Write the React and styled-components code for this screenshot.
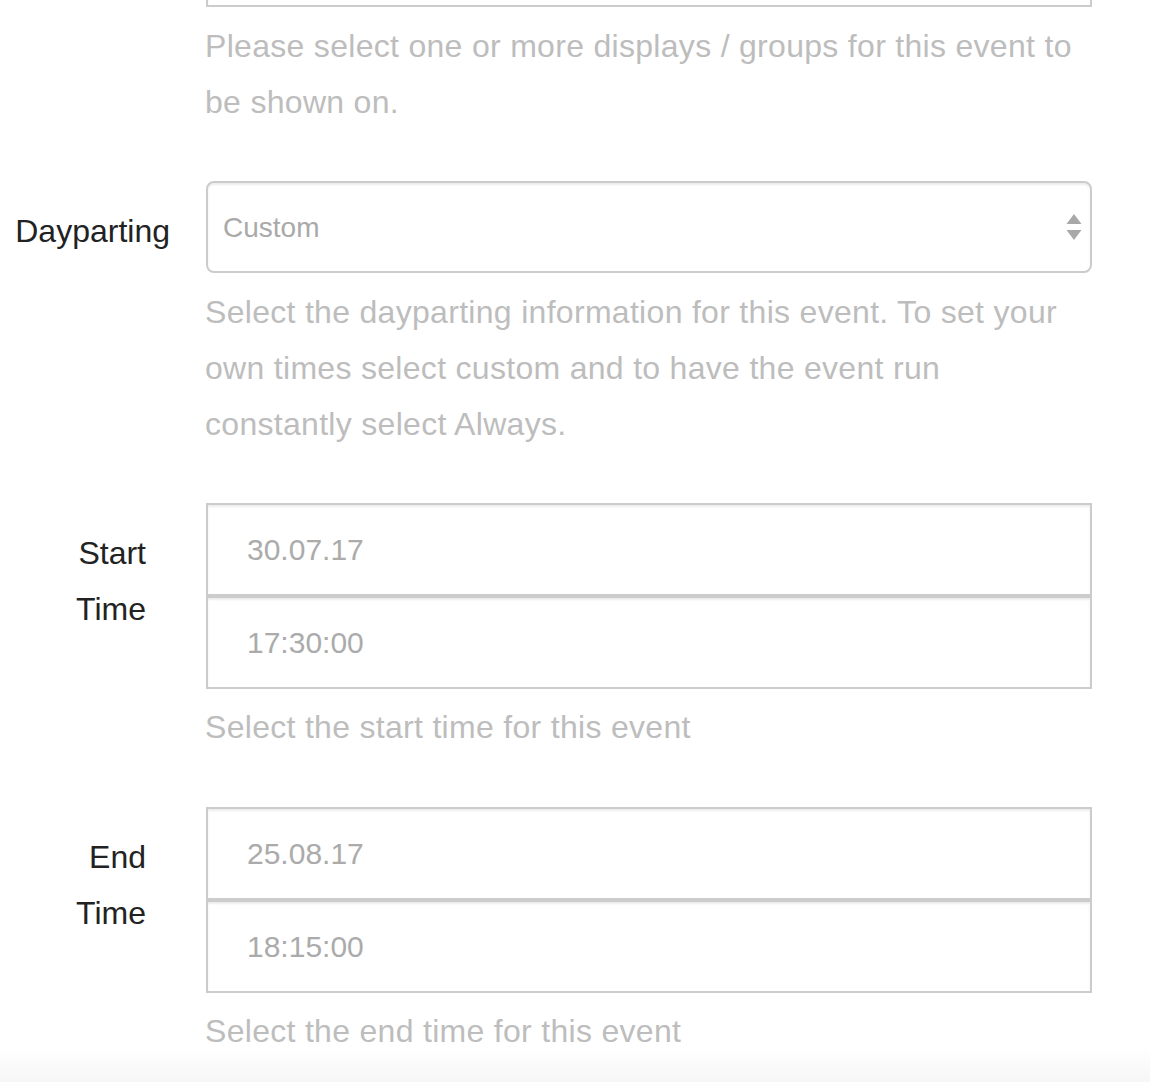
import React from "react";
import styled, { createGlobalStyle } from "styled-components";

const Global = createGlobalStyle`
  html, body { margin: 0; padding: 0; background: #fff; }
  body { font-family: "Liberation Sans", Arial, sans-serif; }
  * { box-sizing: border-box; }
`;

const Page = styled.div`
  width: 1150px;
  height: 1082px;
  overflow: hidden;
  background: linear-gradient(to bottom, #ffffff 0, #ffffff 1048px, #f6f6f6 100%);
`;

const Form = styled.form`
  display: flex;
  flex-direction: column;
`;

const Row = styled.div`
  display: flex;
  align-items: flex-start;
  margin-bottom: ${(p) => p.$gap}px;
`;

const Label = styled.label`
  flex: 0 0 206px;
  width: 206px;
  padding: 22px ${(p) => p.$inset}px 0 ${(p) => p.$left || 0}px;
  text-align: right;
  font-size: 32px;
  line-height: 56px;
  color: #222;
  white-space: normal;
`;

const Field = styled.div`
  flex: 0 0 886px;
  width: 886px;
  display: flex;
  flex-direction: column;
`;

const PrevInput = styled.div`
  height: 92px;
  margin-top: -85px;
  border: 2px solid #ccc;
  box-shadow: inset 0 2px 2px rgba(0, 0, 0, 0.075);
`;

const Help = styled.p`
  margin: ${(p) => p.$top || 11}px 0 0 -1px;
  font-size: 32px;
  line-height: 56px;
  letter-spacing: 0.3px;
  color: #bdbdbd;
`;

const SelectBox = styled.div`
  height: 92px;
  border: 2px solid #ccc;
  border-radius: 8px;
  box-shadow: inset 0 2px 2px rgba(0, 0, 0, 0.075);
  display: flex;
  align-items: center;
  padding: 2px 8px 0 15px;
  font-size: 28px;
  color: #a9a9a9;
`;

const SelectValue = styled.span`
  flex: 1;
`;

const Arrows = styled.svg`
  width: 16px;
  height: 28px;
  margin-top: -2px;
`;

const InputStack = styled.div`
  display: flex;
  flex-direction: column;
`;

const TextInput = styled.div`
  height: 93px;
  border: 2px solid #ccc;
  box-shadow: inset 0 2px 2px rgba(0, 0, 0, 0.075);
  display: flex;
  align-items: center;
  padding-left: 39px;
  font-size: 30px;
  color: #ababab;
`;

function DateTimeRow({ label, date, time, help, gap }) {
  return (
    <Row $gap={gap}>
      <Label $inset={60} $left={56}>
        {label}
      </Label>
      <Field>
        <InputStack>
          <TextInput>{date}</TextInput>
          <TextInput>{time}</TextInput>
        </InputStack>
        <Help $top={10}>{help}</Help>
      </Field>
    </Row>
  );
}

export default function App() {
  return (
    <Page>
      <Global />
      <Form>
        <Row $gap={51}>
          <Label $inset={36} />
          <Field>
            <PrevInput />
            <Help>
              Please select one or more displays / groups for this event to be shown on.
            </Help>
          </Field>
        </Row>
        <Row $gap={51}>
          <Label $inset={36}>Dayparting</Label>
          <Field>
            <SelectBox>
              <SelectValue>Custom</SelectValue>
              <Arrows viewBox="0 0 16 28">
                <path d="M8 1 L15.5 11 L0.5 11 Z" fill="#a8a8a8" />
                <path d="M0.5 17 L15.5 17 L8 27 Z" fill="#a8a8a8" />
              </Arrows>
            </SelectBox>
            <Help>
              Select the dayparting information for this event. To set your own times select
              custom and to have the event run constantly select Always.
            </Help>
          </Field>
        </Row>
        <DateTimeRow
          label="Start Time"
          date="30.07.17"
          time="17:30:00"
          help="Select the start time for this event"
          gap={52}
        />
        <DateTimeRow
          label="End Time"
          date="25.08.17"
          time="18:15:00"
          help="Select the end time for this event"
          gap={0}
        />
      </Form>
    </Page>
  );
}
